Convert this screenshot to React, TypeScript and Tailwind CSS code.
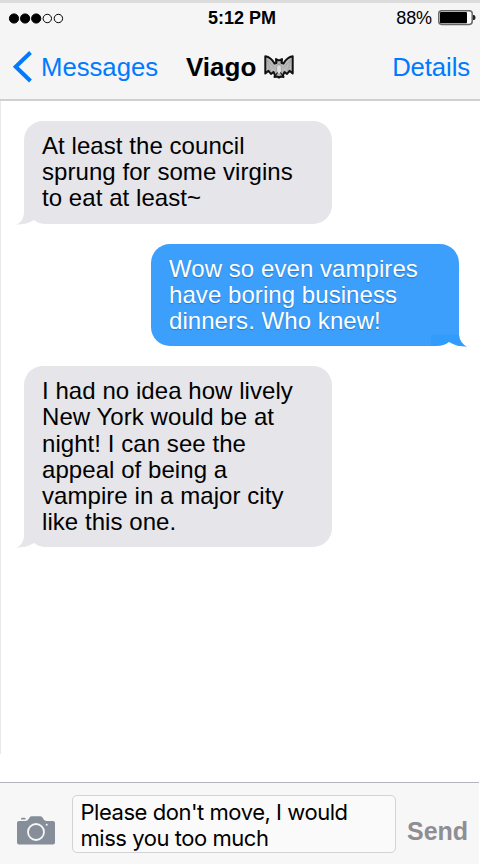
import type { ReactNode } from 'react';
import clsx from 'clsx';

type Message = {
  id: number;
  from: 'them' | 'me';
  lines: string[];
};

const messages: Message[] = [
  { id: 1, from: 'them', lines: ['At least the council', 'sprung for some virgins', 'to eat at least~'] },
  { id: 2, from: 'me', lines: ['Wow so even vampires', 'have boring business', 'dinners. Who knew!'] },
  {
    id: 3,
    from: 'them',
    lines: [
      'I had no idea how lively',
      'New York would be at',
      'night! I can see the',
      'appeal of being a',
      'vampire in a major city',
      'like this one.',
    ],
  },
];

// ── Icons ───────────────────────────────────────────────────────────────

function SignalDots() {
  return (
    <svg className="w-[56px] h-[12px]" viewBox="0 0 56 12" fill="none" stroke="#000">
      {[0, 1, 2, 3, 4].map(i => (
        <circle key={i} cx={6 + i * 11.1} cy="6.5" r={i < 3 ? 4.6 : 4.2} fill={i < 3 ? '#000' : 'none'} />
      ))}
    </svg>
  );
}

function BatteryIcon() {
  return (
    <svg className="w-[38px] h-[16px] shrink-0" viewBox="0 0 38 16">
      <rect x="0.8" y="0.8" width="33.4" height="13.6" rx="2.8" fill="#fff" stroke="#666" strokeWidth="1.5" />
      <rect x="2" y="2" width="27" height="11.2" rx="1" fill="#000" />
      <path d="M35 5h.8a1.7 2.5 0 0 1 0 5H35z" fill="#222" />
    </svg>
  );
}

function BackChevron() {
  return (
    <svg className="w-[20px] h-[32px]" viewBox="0 0 20 32" fill="none" stroke="#007aff" strokeWidth="4">
      <path d="M18.5 1.5 3.7 15.7 18.5 30" />
    </svg>
  );
}

function BatIcon() {
  return (
    <svg className="w-[30px] h-[24px]" viewBox="0 0 30 24" stroke="#111" strokeLinejoin="round">
      <path
        d="M1.3 1.3C5.500 2 8.500 5 10.500 8.500L12.300 8 12 4l2 1.200h2L18 4l-.3 4 1.800.5C21.500 5 24.500 2 28.700 1.300V18.500L25.500 15.800 23 19l-2.500-2-1.500 3.200.5 1.800-2.500-.5-2 1-2-1-2.500.5.5-1.800L9.500 17 7 19l-2.500-3.200-3.200 2.700z"
        fill="#bababa"
        strokeWidth="2"
      />
      <path d="M3 4.500l8 9M3 5l3.500 11M27 4.500l-8 9M27 5l-3.500 11" stroke="#999" strokeWidth="0.6" />
      <path d="M13 10h4l.5 6-2.500 4-2.500-4z" fill="#ddd" stroke="#888" strokeWidth="0.6" />
      <path d="M11.500 20.500l2-3M18.500 20.500l-2-3" strokeWidth="1.2" />
      <path d="M13.500 6.500v1M16.500 6.500v1" stroke="#333" strokeWidth="0.8" />
      <path d="M14.500 9h1" stroke="#b66" strokeWidth="1" />
    </svg>
  );
}

function CameraIcon() {
  return (
    <svg className="w-[38px] h-[29px]" viewBox="0 0 38 29">
      <path
        d="M2 5h6.500Q10.500 5 11.500 3.200L12.500 1.600Q13.300.2 15 .2h8q1.700 0 2.500 1.400l1 1.600Q27.500 5 29.500 5H36q2 0 2 2v19.500q0 2-2 2H2q-2 0-2-2V7q0-2 2-2z"
        fill="#858e99"
      />
      <path d="M4 3.500V2.600Q4 1.800 5 1.800h2.500q1 0 1 .8v.9z" fill="#858e99" />
      <circle cx="19" cy="16" r="8" fill="none" stroke="#f7f7f7" strokeWidth="1.8" />
      <circle cx="29.700" cy="8.800" r="1" fill="#f7f7f7" />
    </svg>
  );
}

// ── Messages ────────────────────────────────────────────────────────────

function BubbleTail({ mine }: { mine: boolean }) {
  return (
    <svg
      className={clsx('absolute bottom-[-1px] w-[36px] h-[17px]', mine ? 'right-[-8px] -scale-x-100' : 'left-[-8px]')}
      viewBox="0 0 36 17"
    >
      <path
        d={mine ? 'M8 5Q7 13 0 16.800q10 0 18-4.500Q24 16 30 16h6V5z' : 'M8.200 0V3Q8 14 0 16.800q10 0 18-4.500Q24 16 30 16h6V0z'}
        fill={mine ? '#329cfc' : '#e5e5ea'}
      />
      {/* notch between the tail and the bottom edge */}
      <path d="M0 17q10-.2 18-5 5 4 12 4v1z" fill="#fff" />
    </svg>
  );
}

function Bubble({ from, children }: { from: Message['from']; children: ReactNode }) {
  const mine = from === 'me';
  return (
    <div
      className={clsx(
        'relative w-[308px] rounded-[19px] px-[18px] py-[12px] text-[24px] leading-[26.2px] tracking-[0.06px]',
        mine
          ? 'self-end rounded-br-none bg-[#3b9ffb] text-white [text-shadow:0_1px_1px_#2878c8]'
          : 'self-start rounded-bl-none bg-[#e5e5ea] text-black',
      )}
    >
      <BubbleTail mine={mine} />
      <div className="relative">{children}</div>
    </div>
  );
}

export default function App() {
  return (
    <div className="flex h-[864px] w-[480px] flex-col overflow-hidden bg-white font-['Liberation_Sans',Arial,sans-serif]">
      <header className="h-[101px] border-t-[3px] border-b-2 border-t-[#dcdcdc] border-b-[#d0d0d0] bg-[#f5f5f5]">
        {/* Status bar */}
        <div className="grid h-[30px] grid-cols-3 items-center pl-[8px] pr-[4px]">
          <SignalDots />
          <span className="pl-[44px] text-[18px] font-bold whitespace-nowrap">5:12 PM</span>
          <div className="flex items-center justify-end gap-[6px]">
            <span className="text-[18px] tracking-[-0.1px]">88%</span>
            <BatteryIcon />
          </div>
        </div>

        {/* Navigation */}
        <nav className="flex h-[68px] items-center pl-[12px] pr-[10px] text-[26px] text-[#007aff]">
          <BackChevron />
          <span className="ml-[9px] w-[118px] text-[25.7px] whitespace-nowrap">Messages</span>
          <span className="ml-[27px] font-bold text-black">Viago</span>
          <span className="ml-[8px]"><BatIcon /></span>
          <span className="ml-auto text-[25.7px] tracking-[-0.1px]">Details</span>
        </nav>
      </header>

      <main className="flex h-[653px] flex-col gap-[20px] border-l border-[#e8e8ea] pt-[20px] pl-[23px] pr-[21px]">
        {messages.map(message => (
          <Bubble key={message.id} from={message.from}>
            {message.lines.map(line => <p key={line} className="whitespace-nowrap">{line}</p>)}
          </Bubble>
        ))}
      </main>

      {/* Composer */}
      <footer className="mt-auto mr-px flex h-[82px] border-t border-[#b4b4bc] bg-[#f7f7f7] pl-[17px]">
        <div className="pt-[33px]"><CameraIcon /></div>
        <div className="ml-[17px] mt-[12px] h-[58px] w-[324px] shrink-0 rounded-[5px] border border-[#d3d3d6] bg-[#fafafa] px-[7.5px] pt-[3px] font-[Inter,sans-serif] text-[22px] leading-[26px] tracking-[-0.46px] whitespace-nowrap text-black">
          <p>Please don't move, I would</p>
          <p>miss you too much</p>
        </div>
        <span className="ml-[11px] mt-[30px] text-[25px] font-bold text-[#8e8e93]">Send</span>
      </footer>
    </div>
  );
}
